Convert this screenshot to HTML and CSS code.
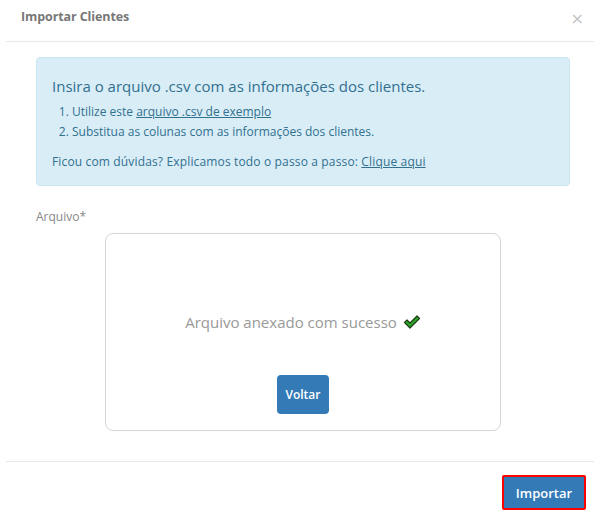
FILE: index.html
```html
<!DOCTYPE html>
<html lang="pt-BR">
<head>
  <meta charset="UTF-8" />
  <title>Importar Clientes</title>
  <link rel="stylesheet" href="styles.css">
</head>
<body>
  <div class="modal">
    <!-- HEADER -->
    <div class="modal-header">
      <h4 class="modal-title">Importar Clientes</h4>
      <button class="close" type="button">&times;</button>
    </div>

    <!-- BODY -->
    <div class="modal-body">
      <div class="alert">
        <h4>Insira o arquivo .csv com as informações dos clientes.</h4>
        <ol>
          <li>Utilize este <a href="#">arquivo .csv de exemplo</a></li>
          <li>Substitua as colunas com as informações dos clientes.</li>
        </ol>
        <p>Ficou com dúvidas? Explicamos todo o passo a passo: <a href="#">Clique aqui</a></p>
      </div>

      <label class="field-label">Arquivo*</label>
      <div class="dropzone">
        <p class="success">Arquivo anexado com sucesso
          <svg class="check" viewBox="0 0 18 16" width="18" height="16">
            <path d="M1.5 8.5 L4 6 L7 9 L14 2 L16.5 4.5 L7 14 Z" fill="#2ea52a" stroke="#1b3d12" stroke-width="1.2" stroke-linejoin="round"/>
          </svg>
        </p>
        <button class="btn" type="button">Voltar</button>
      </div>
    </div>

    <!-- FOOTER -->
    <div class="modal-footer">
      <button class="btn btn-import" type="button">Importar</button>
    </div>
  </div>
</body>
</html>
```

FILE: styles.css
```css
* {margin: 0; padding: 0; box-sizing: border-box;}
body {
  font-family: "Open Sans", "Noto Sans", sans-serif;
  background: #fff;
  color: #555;
  overflow: hidden;
}

.modal {margin-left: 6px; width: 594px;}

/* Header */
.modal-header {
  height: 42px;
  padding: 0 15px;
  border-bottom: 1px solid #e8e8e8;
  display: flex; align-items: center; justify-content: space-between;
}
.modal-title {font-size: 12.5px; font-weight: 700; color: #777; margin-top: -8px; letter-spacing: -0.1px;}
.close {
  background: none; border: none; cursor: pointer;
  font-size: 16px; color: #c4c4c4; font-family: "DejaVu Sans", sans-serif;
  margin-right: 1px; margin-top: -4px;
}

/* Body */
.modal-body {padding: 15px 30px 30px;}
.alert {
  background: #d9edf7; border: 1px solid #c8e6f2; border-radius: 4px;
  color: #31708f; padding: 17px 15px 15px;
  height: 129px;
}
.alert h4 {font-size: 15px; font-weight: 400; line-height: 22px;}
.alert ol {font-size: 12px; line-height: 20px; padding-left: 20px; margin-top: 5px;}
.alert p {font-size: 12px; line-height: 20px; margin-top: 10px; letter-spacing: 0.15px;}
.alert a {color: #31708f; text-decoration: underline;}

.field-label {display: block; font-size: 12px; color: #888; margin-top: 23px; line-height: 16px;}

.dropzone {
  width: 396px; height: 198px; margin: 8px auto 0;
  border: 1px solid #d6d6d6; border-radius: 8px;
  display: flex; flex-direction: column; align-items: center;
}
.success {
  font-size: 15px; color: #999; margin-top: 78px;
  display: flex; align-items: center; gap: 6px;
}
.btn {
  background: #337ab7; color: #fff; border: none; border-radius: 4px;
  font-family: inherit; font-size: 12px; font-weight: 600; cursor: pointer;
}
.dropzone .btn {width: 52px; height: 39px; margin-top: 43px;}

/* Footer */
.modal-footer {
  border-top: 1px solid #e8e8e8;
  padding: 13px 14px 0 0;
  display: flex; justify-content: flex-end;
}
.btn-import {
  width: 84px; height: 35px; font-size: 13px;
  border: 2px solid #f00; border-radius: 2px;
}
```
